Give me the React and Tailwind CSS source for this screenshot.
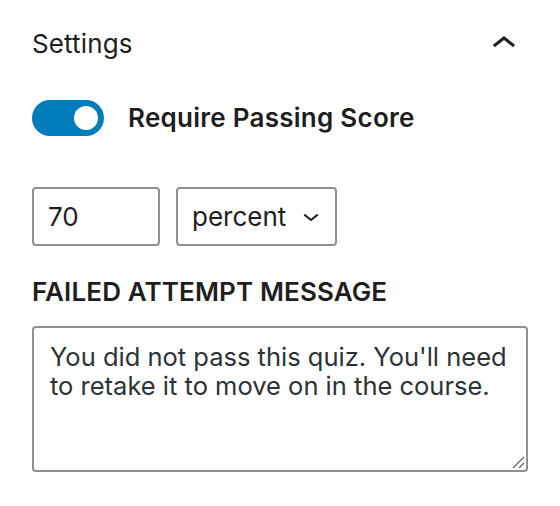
import React from "react";

const ChevronUp = () => (
  <svg width="48" height="48" viewBox="0 0 24 24" fill="#1e1e1e" aria-hidden="true">
    <path d="M6.5 12.4L12 8l5.5 4.4-.9 1.2L12 10l-4.6 3.6-1-1.2z" />
  </svg>
);

const ChevronDown = () => (
  <svg width="32" height="32" viewBox="0 0 24 24" fill="#1e1e1e" aria-hidden="true">
    <path d="M17.5 11.6L12 16l-5.5-4.4.9-1.2L12 14l4.6-3.6 1 1.2z" />
  </svg>
);

const ResizeHandle = () => (
  <svg width="16" height="16" viewBox="0 0 16 16" aria-hidden="true">
    <path d="M14 3 L3 14 M14 9 L9 14" stroke="#6b6b6b" strokeWidth="1.4" />
  </svg>
);

const Toggle = ({ checked = true }) => (
  <span
    className={`flex h-[36px] w-[72px] shrink-0 items-center rounded-full px-[6px] ${
      checked ? "justify-end bg-[#007cba]" : "justify-start bg-white"
    }`}
  >
    <span className="h-[24px] w-[24px] rounded-full bg-white" />
  </span>
);

export default function App() {
  return (
    <div className="min-h-[506px] w-[560px] bg-white px-[32px] pt-[20px] font-['Inter',sans-serif] text-[#1e1e1e]">
      {/* panel header */}
      <div className="flex h-[48px] items-center justify-between">
        <h2 className="text-[26px] font-normal leading-[32px] tracking-[0.005em]">Settings</h2>
        <ChevronUp />
      </div>

      {/* toggle */}
      <div className="mt-[32px] flex h-[36px] items-center gap-[24px]">
        <Toggle />
        <span className="text-[26px] font-semibold leading-[32px] tracking-[0.01em]">
          Require Passing Score
        </span>
      </div>

      {/* score + unit */}
      <div className="mt-[51px] flex gap-[16px]">
        <input
          type="text"
          defaultValue="70"
          className="h-[59px] w-[128px] rounded-[4px] border-2 border-[#8f8f8f] px-[14px] text-[26px] text-[#1e1e1e] outline-none"
        />
        <div className="relative">
          <select
            defaultValue="percent"
            className="h-[59px] w-[161px] appearance-none rounded-[4px] border-2 border-[#8f8f8f] bg-white pl-[14px] text-[26px] text-[#1e1e1e] outline-none"
          >
            <option value="percent">percent</option>
            <option value="points">points</option>
          </select>
          <span className="pointer-events-none absolute right-[10px] top-[13px]">
            <ChevronDown />
          </span>
        </div>
      </div>

      {/* message */}
      <label className="mt-[30px] block text-[26px] font-semibold uppercase leading-[32px] tracking-[0.005em]">
        Failed attempt message
      </label>
      <div className="relative mt-[18px]">
        <textarea
          defaultValue="You did not pass this quiz. You'll need to retake it to move on in the course."
          className="block h-[146px] w-full resize-none rounded-[4px] border-2 border-[#8f8f8f] px-[16px] pt-[14px] text-[25.5px] leading-[29px] text-[#2c3338] outline-none"
        />
        <span className="pointer-events-none absolute bottom-[2px] right-[2px]">
          <ResizeHandle />
        </span>
      </div>
    </div>
  );
}
